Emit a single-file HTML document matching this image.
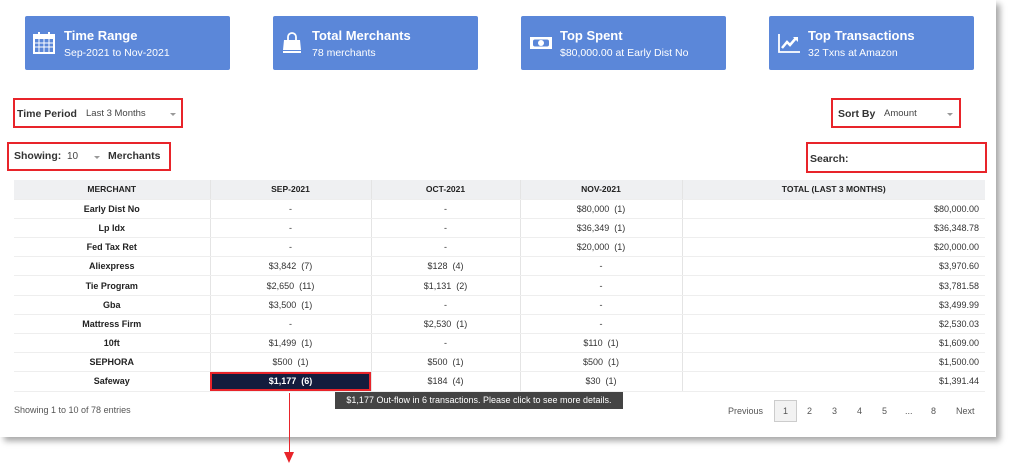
<!DOCTYPE html>
<html><head><meta charset="utf-8"><style>
*{margin:0;padding:0;box-sizing:border-box}
body{width:1024px;height:476px;background:#fff;font-family:"Liberation Sans",sans-serif;position:relative;overflow:hidden;color:#333}
.page{position:absolute;left:0;top:0;width:996px;height:437px;background:#fff;box-shadow:4px 4px 6px rgba(0,0,0,.35)}
.card{position:absolute;top:16px;width:205px;height:54px;background:#5b87d9;border-radius:2px;color:#fff}
.card .t{position:absolute;left:39px;top:12px;font-weight:bold;font-size:13px}
.card .s{position:absolute;left:39px;top:31px;font-size:10.5px}
.card svg{position:absolute;left:8px;top:16px}
.red{position:absolute;border:2px solid #e8242a}
.lbl{position:absolute;font-size:10.5px;font-weight:bold;color:#333}
.sel{position:absolute;font-size:9.5px;color:#444}
.car{position:absolute;width:0;height:0;border-left:3px solid transparent;border-right:3px solid transparent;border-top:3px solid #999}
table{position:absolute;left:14px;top:180px;width:971px;border-collapse:collapse;font-size:9px}
td,th{height:19.2px;text-align:center;border-right:1px solid #e4e4e4;border-bottom:1px solid #eee;padding:0}
th{background:#eff0f2;font-weight:bold;font-size:8.5px;color:#222}
td:first-child{color:#222;font-weight:bold}
tr td:last-child,tr th:last-child{border-right:none}
td.r{text-align:right;padding-right:6px}
.pg{position:absolute;top:405px;font-size:9px;color:#555}
</style></head><body>
<div class="page">
<div class="card" style="left:25px"><svg width="22" height="22" viewBox="0 0 22 22"><rect x="1" y="3" width="20" height="18" fill="none" stroke="#fff" stroke-width="2"/><rect x="1" y="3" width="20" height="4" fill="#fff"/><rect x="5" y="0" width="2" height="5" fill="#fff"/><rect x="15" y="0" width="2" height="5" fill="#fff"/><path d="M1 11H21M1 15H21M6 7V21M11 7V21M16 7V21" stroke="#fff"/></svg><div class="t">Time Range</div><div class="s">Sep-2021 to Nov-2021</div></div>
<div class="card" style="left:273px"><svg width="22" height="22" viewBox="0 0 22 22"><path d="M7 8V5a4 4 0 0 1 8 0v3" fill="none" stroke="#fff" stroke-width="1.8"/><path d="M3 8H19L20 18H2Z" fill="#fff"/><rect x="2" y="19" width="18" height="2" fill="#fff"/></svg><div class="t">Total Merchants</div><div class="s">78 merchants</div></div>
<div class="card" style="left:521px"><svg width="24" height="22" viewBox="0 0 24 22"><rect x="1" y="5" width="22" height="12" fill="#fff"/><rect x="4" y="7.5" width="16" height="7" rx="2" fill="#5b87d9"/><circle cx="12" cy="11" r="3" fill="#fff"/></svg><div class="t" style="left:39px">Top Spent</div><div class="s">$80,000.00 at Early Dist No</div></div>
<div class="card" style="left:769px"><svg width="24" height="22" viewBox="0 0 24 22"><path d="M2 2V20H23" fill="none" stroke="#fff" stroke-width="1.8"/><path d="M5 16L10 10L13 13L19 6" fill="none" stroke="#fff" stroke-width="2.5"/><path d="M16 5H21V10Z" fill="#fff"/></svg><div class="t">Top Transactions</div><div class="s">32 Txns at Amazon</div></div>

<div class="red" style="left:13px;top:98px;width:170px;height:30px"></div>
<div class="lbl" style="left:17px;top:108px">Time Period</div>
<div class="sel" style="left:86px;top:108px">Last 3 Months</div>
<div class="car" style="left:170px;top:113px"></div>

<div class="red" style="left:7px;top:142px;width:164px;height:29px"></div>
<div class="lbl" style="left:14px;top:150px">Showing:</div>
<div class="sel" style="left:67px;top:151px;font-size:10px">10</div>
<div class="car" style="left:94px;top:156px"></div>
<div class="lbl" style="left:108px;top:150px">Merchants</div>

<div class="red" style="left:831px;top:98px;width:130px;height:30px"></div>
<div class="lbl" style="left:838px;top:108px">Sort By</div>
<div class="sel" style="left:884px;top:108px">Amount</div>
<div class="car" style="left:947px;top:113px"></div>

<div class="red" style="left:806px;top:142px;width:181px;height:31px"></div>
<div class="lbl" style="left:810px;top:153px">Search:</div>

<table>
<tr><th style="width:196px">MERCHANT</th><th style="width:161px">SEP-2021</th><th style="width:149px">OCT-2021</th><th style="width:162px">NOV-2021</th><th>TOTAL (LAST 3 MONTHS)</th></tr>
<tr><td>Early Dist No</td><td>-</td><td>-</td><td>$80,000 &nbsp;(1)</td><td class="r">$80,000.00</td></tr>
<tr><td>Lp Idx</td><td>-</td><td>-</td><td>$36,349 &nbsp;(1)</td><td class="r">$36,348.78</td></tr>
<tr><td>Fed Tax Ret</td><td>-</td><td>-</td><td>$20,000 &nbsp;(1)</td><td class="r">$20,000.00</td></tr>
<tr><td>Aliexpress</td><td>$3,842 &nbsp;(7)</td><td>$128 &nbsp;(4)</td><td>-</td><td class="r">$3,970.60</td></tr>
<tr><td>Tie Program</td><td>$2,650 &nbsp;(11)</td><td>$1,131 &nbsp;(2)</td><td>-</td><td class="r">$3,781.58</td></tr>
<tr><td>Gba</td><td>$3,500 &nbsp;(1)</td><td>-</td><td>-</td><td class="r">$3,499.99</td></tr>
<tr><td>Mattress Firm</td><td>-</td><td>$2,530 &nbsp;(1)</td><td>-</td><td class="r">$2,530.03</td></tr>
<tr><td>10ft</td><td>$1,499 &nbsp;(1)</td><td>-</td><td>$110 &nbsp;(1)</td><td class="r">$1,609.00</td></tr>
<tr><td>SEPHORA</td><td>$500 &nbsp;(1)</td><td>$500 &nbsp;(1)</td><td>$500 &nbsp;(1)</td><td class="r">$1,500.00</td></tr>
<tr><td>Safeway</td><td style="background:#141c3d;color:#fff;font-weight:bold;outline:2px solid #e8242a;outline-offset:-2px">$1,177 &nbsp;(6)</td><td>$184 &nbsp;(4)</td><td>$30 &nbsp;(1)</td><td class="r">$1,391.44</td></tr>
</table>

<div style="position:absolute;left:335px;top:392px;width:288px;height:17px;background:#444;color:#fff;font-size:9px;line-height:17px;text-align:center">$1,177 Out-flow in 6 transactions. Please click to see more details.</div>
<div class="pg" style="left:14px">Showing 1 to 10 of 78 entries</div>
<div class="pg" style="left:728px;top:406px">Previous</div>
<div style="position:absolute;left:774px;top:400px;width:23px;height:22px;border:1px solid #ccc;background:#f2f2f2;font-size:9px;text-align:center;line-height:20px;color:#555">1</div>
<div class="pg" style="left:807px;top:406px">2</div>
<div class="pg" style="left:832px;top:406px">3</div>
<div class="pg" style="left:857px;top:406px">4</div>
<div class="pg" style="left:882px;top:406px">5</div>
<div class="pg" style="left:905px;top:406px">...</div>
<div class="pg" style="left:931px;top:406px">8</div>
<div class="pg" style="left:956px;top:406px">Next</div>
</div>
<div style="position:absolute;left:289px;top:393px;width:1px;height:60px;background:#e8242a"></div>
<div style="position:absolute;left:284px;top:452px;width:0;height:0;border-left:5.5px solid transparent;border-right:5.5px solid transparent;border-top:11px solid #e8242a"></div>
</body></html>
